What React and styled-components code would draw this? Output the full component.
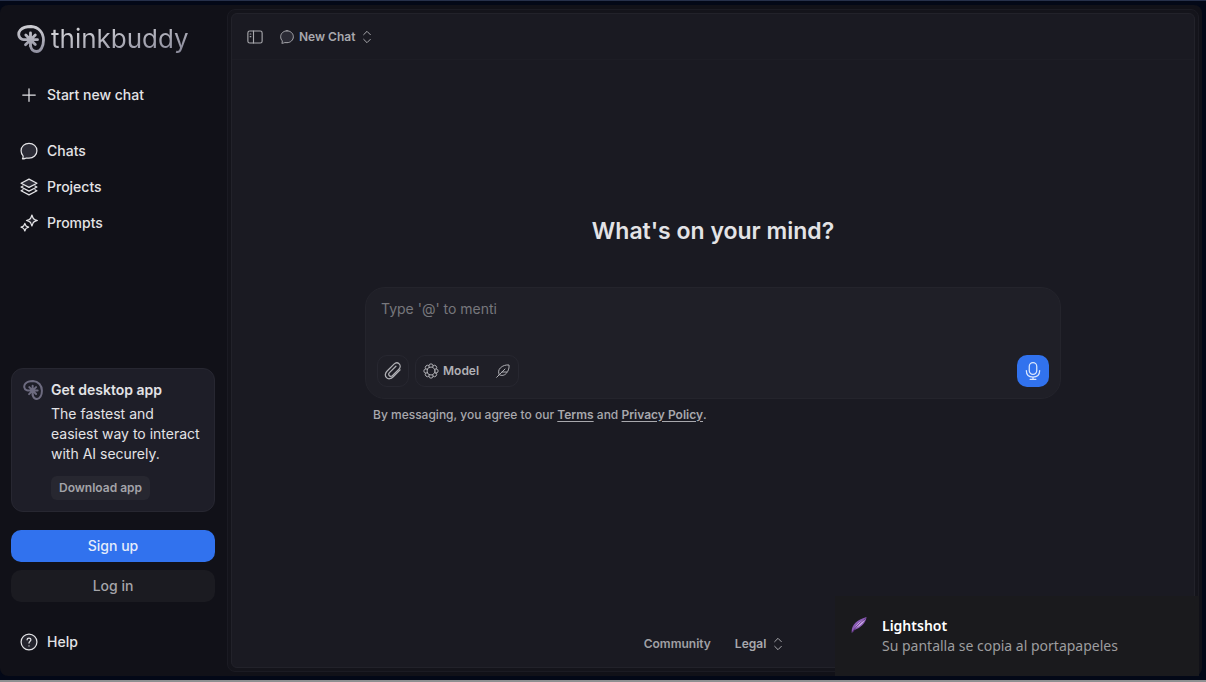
import styled, { createGlobalStyle } from "styled-components";

const GlobalStyle = createGlobalStyle`
  * {
    box-sizing: border-box;
  }
  body {
    margin: 0;
    background: #030817;
    font-family: Inter, "Liberation Sans", sans-serif;
    font-size: 14px;
    line-height: 20px;
    color: #e3e3e6;
  }
  button, textarea {
    font: inherit;
    color: inherit;
    border: 0;
    padding: 0;
    margin: 0;
    background: none;
  }
  button {
    cursor: pointer;
  }
  h1, h2, p {
    margin: 0;
  }
  svg {
    display: block;
    flex: none;
  }
`;

const Desktop = styled.div`
  position: relative;
  display: flex;
  flex-direction: column;
  min-height: 100vh;
  border-top: 1px solid #26304a;
  border-bottom: 2px solid #8f9092;
`;

const Window = styled.div`
  flex: 1;
  display: flex;
  margin: 4px 4px 4px 0;
  padding: 4px 3px 4px 0;
  background: #111118;
  border-radius: 8px;
`;

const Sidebar = styled.aside`
  display: flex;
  flex-direction: column;
  width: 227px;
  flex: none;
  padding: 16px 12px 12px 11px;
`;

const Brand = styled.a`
  display: flex;
  align-items: center;
  gap: 6px;
  height: 28px;
  margin-left: 6px;
  text-decoration: none;
`;

const BrandName = styled.span`
  font-size: 26px;
  line-height: 32px;
  color: transparent;
  background: linear-gradient(170deg, #cfcfd4 20%, #8c8c9c 90%);
  background-clip: text;
`;

const Nav = styled.nav`
  display: flex;
  flex-direction: column;
  margin-top: ${(p) => p.$gap}px;
`;

const NavLink = styled.a`
  display: flex;
  align-items: center;
  gap: 8px;
  height: 36px;
  padding-left: 8px;
  font-weight: 500;
  color: #e3e3e6;
  text-decoration: none;
`;

const Card = styled.section`
  display: flex;
  gap: 8px;
  margin-top: auto;
  padding: 11px 12px 11px 11px;
  background: #1e1e28;
  border: 1px solid #272731;
  border-radius: 12px;
`;

const CardIcon = styled.div`
  color: #6d6b80;
`;

const CardTitle = styled.h2`
  font-size: 14px;
  line-height: 20px;
  font-weight: 600;
`;

const CardText = styled.p`
  margin: 4px 0 12px;
`;

const SmallButton = styled.button`
  height: 24px;
  padding: 0 8px;
  border-radius: 6px;
  background: #272730;
  color: #a3a3a8;
  font-size: 12px;
  font-weight: 600;
`;

const WideButton = styled.button`
  height: 32px;
  margin-top: ${(p) => (p.$primary ? 18 : 8)}px;
  border-radius: 10px;
  font-weight: 500;
  background: ${(p) => (p.$primary ? "#3172ee" : "#1b1b21")};
  color: ${(p) => (p.$primary ? "#e4ecfb" : "#a5a5aa")};
`;

const Frame = styled.div`
  flex: 1;
  display: flex;
  padding: 3px;
  border: 1px solid #1b1b23;
  border-radius: 8px;
  background: #14141b;
`;

const Main = styled.main`
  flex: 1;
  display: flex;
  flex-direction: column;
  border: 1px solid #22222a;
  border-radius: 6px;
  background: #1a1a22;
`;

const Header = styled.header`
  display: flex;
  align-items: center;
  gap: 15px;
  height: 46px;
  padding-left: 14px;
  border-bottom: 1px solid #1d1d25;
  color: #a8a8ad;
`;

const TextButton = styled.button`
  display: flex;
  align-items: center;
  gap: 4px;
  font-size: 12px;
  font-weight: 600;
  color: #a8a8ad;
`;

const Center = styled.div`
  flex: 1;
  display: flex;
  flex-direction: column;
  align-items: center;
  justify-content: center;
  padding: 0 24px 42px;
`;

const Title = styled.h1`
  font-size: 23px;
  line-height: 32px;
  font-weight: 600;
`;

const Composer = styled.form`
  width: 100%;
  max-width: 696px;
  margin-top: 40px;
  padding: 11px;
  border: 1px solid #24242c;
  border-radius: 20px;
  background: #1f1f27;
`;

const Prompt = styled.textarea`
  display: block;
  width: 100%;
  height: 56px;
  padding: 0 4px;
  resize: none;
  outline: none;
  line-height: 20px;
  &::placeholder {
    color: #77777c;
    opacity: 1;
  }
`;

const Tools = styled.div`
  display: flex;
  gap: 6px;
  color: #b0b0b5;
`;

const ToolGroup = styled.div`
  display: flex;
  align-items: center;
  gap: 2px;
  height: 32px;
  border: 1px solid #272730;
  border-radius: 10px;
`;

const Tool = styled.button`
  display: flex;
  align-items: center;
  justify-content: center;
  gap: 4px;
  min-width: 30px;
  height: 30px;
  padding: 0 ${(p) => (p.$iconOnly ? 0 : 7)}px;
  font-size: 12px;
  font-weight: 600;
`;

const MicButton = styled.button`
  display: flex;
  align-items: center;
  justify-content: center;
  width: 32px;
  height: 32px;
  margin-left: auto;
  border-radius: 10px;
  background: #3172ee;
  color: #dbe7fd;
`;

const Notice = styled.p`
  width: 100%;
  max-width: 696px;
  margin-top: 6px;
  padding: 0 8px;
  font-size: 12px;
  font-weight: 500;
  color: #a8a8ad;
  a {
    color: inherit;
    font-weight: 600;
    text-underline-offset: 2px;
  }
`;

const Footer = styled.footer`
  display: flex;
  align-items: center;
  justify-content: center;
  gap: 24px;
  height: 46px;
  padding-left: 4px;
  color: #9c9ca1;
`;

const FooterLink = styled.a`
  font-size: 12px;
  font-weight: 600;
  color: #a0a0a5;
  text-decoration: none;
`;

const Toast = styled.div`
  position: absolute;
  right: 7px;
  bottom: 4px;
  display: flex;
  gap: 14px;
  width: 364px;
  height: 80px;
  padding: 20px 16px;
  background: #1a1a1d;
  font-family: "Noto Sans", "Open Sans", sans-serif;
  font-size: 14px;
  line-height: 20px;
  color: #9d9d9f;
`;

const ToastTitle = styled.p`
  font-weight: 600;
  color: #fff;
`;

const Icon = ({ size = 20, width = 1.5, children }) => (
  <svg
    width={size}
    height={size}
    viewBox="0 0 24 24"
    fill="none"
    stroke="currentColor"
    strokeWidth={width}
    strokeLinecap="round"
    strokeLinejoin="round"
    aria-hidden="true"
  >
    {children}
  </svg>
);

const BrandMark = ({ size, color = "currentColor" }) => (
  <svg width={size} height={size} viewBox="0 0 28 28" fill="none" stroke={color} strokeLinecap="round" aria-hidden="true">
    <defs>
      <linearGradient id="mark" x1="0" y1="0" x2="0" y2="28" gradientUnits="userSpaceOnUse">
        <stop stopColor="#cfcfd4" />
        <stop offset="1" stopColor="#8f8f9f" />
      </linearGradient>
    </defs>
    <path
      strokeWidth="2.800"
      d="M5 14.200C1.400 12.600.7 8.200 3.300 5.200C6 2.200 10.500 1.500 14 1.500C21.500 1.800 26.500 7.600 26.500 15C26.500 21.600 23.600 26.500 19.600 26.500C16.400 26.500 14.200 24.300 13.600 21"
    />
    <path strokeWidth="2.800" d="M13.500 8V21M6.500 14.700H20.500M8.800 10L18.300 19.500M18.300 10L8.500 19.800" />
  </svg>
);

const ChatIcon = ({ size, width }) => (
  <Icon size={size} width={width}>
    <path
      fill="#2b2b35"
      d="M12 2.700C17.300 2.700 21.500 6.600 21.500 11.600S17.300 20.500 12 20.500C10.800 20.500 9.700 20.500 8.700 20.400C7.300 20.800 6.300 21.500 4.200 21.400C4.700 20.300 5.200 19.200 4.900 17.800C3.300 16.100 2.500 14 2.500 11.600C2.500 6.600 6.700 2.700 12 2.700Z"
    />
  </Icon>
);

const ChevronsIcon = () => (
  <Icon size={16}>
    <path d="M7 8.500L12 3.500L17 8.500M7 15.500L12 20.500L17 15.500" />
  </Icon>
);

const HelpIcon = () => (
  <Icon>
    <circle cx="12" cy="12" r="9.500" fill="#24242d" />
    <path d="M9.700 9.300C9.700 8 10.700 7.200 12 7.200S14.300 8 14.300 9.300C14.300 11 12 11.200 12 13.300M12 16.600V16.700" />
  </Icon>
);

// eight small lobes around an open ring
const ModelIcon = () => {
  const points = Array.from({ length: 8 }, (_, i) => {
    const a = ((i + 0.5) * Math.PI) / 4;
    return [12 + 8.2 * Math.cos(a), 12 + 8.2 * Math.sin(a)].map((n) => n.toFixed(2)).join(" ");
  });
  const d = points.map((p, i) => (i ? `A2.700 2.700 0 0 1 ${p}` : `M${p}`)).join("") + `A2.700 2.700 0 0 1 ${points[0]}Z`;
  const spokes = Array.from({ length: 8 }, (_, i) => {
    const a = ((i + 0.5) * Math.PI) / 4;
    const at = (r) => `${(12 + r * Math.cos(a)).toFixed(2)} ${(12 + r * Math.sin(a)).toFixed(2)}`;
    return `M${at(6)}L${at(8.2)}`;
  }).join("");
  return (
    <Icon size={16}>
      <path d={d} />
      <path d={spokes} />
      <circle cx="12" cy="12" r="6" />
    </Icon>
  );
};

const links = [
  {
    label: "Chats",
    icon: <ChatIcon />,
  },
  {
    label: "Projects",
    icon: (
      <Icon>
        <path fill="#2b2b35" d="M12 2.500L21.500 7.500L12 12.500L2.500 7.500Z" />
        <path d="M4.800 10.800L2.500 12L12 17L21.500 12L19.200 10.800M4.800 15.300L2.500 16.500L12 21.500L21.500 16.500L19.200 15.300" />
      </Icon>
    ),
  },
  {
    label: "Prompts",
    icon: (
      <Icon>
        <path
          fill="#24242d"
          d="M15.500 2.500L16.600 5.400C17.100 6.900 17.600 7.300 19 7.900L22 9L19 10.100C17.600 10.700 17.100 11.100 16.600 12.600L15.500 15.500L14.400 12.600C13.900 11.100 13.400 10.700 12 10.100L9 9L12 7.900C13.400 7.300 13.900 6.900 14.400 5.400Z"
        />
        <path d="M7 12.500L8 14.700C8.300 15.500 8.500 15.700 9.300 16L11.500 17L9.300 18C8.500 18.300 8.300 18.500 8 19.300L7 21.500L6 19.300C5.700 18.500 5.500 18.300 4.700 18L2.500 17L4.700 16C5.500 15.700 5.700 15.500 6 14.700Z" />
      </Icon>
    ),
  },
];

export default function App() {
  return (
    <Desktop>
      <GlobalStyle />
      <Window>
        <Sidebar>
          <Brand href="#home">
            <BrandMark size={28} color="url(#mark)" />
            <BrandName>thinkbuddy</BrandName>
          </Brand>
          <Nav $gap={24} aria-label="New">
            <NavLink href="#new">
              <Icon>
                <path d="M12 4.500V19.500M4.500 12H19.500" />
              </Icon>
              Start new chat
            </NavLink>
          </Nav>
          <Nav $gap={20} aria-label="Library">
            {links.map((link) => (
              <NavLink key={link.label} href={"#" + link.label.toLowerCase()}>
                {link.icon}
                {link.label}
              </NavLink>
            ))}
          </Nav>

          <Card>
            <CardIcon>
              <BrandMark size={20} />
            </CardIcon>
            <div>
              <CardTitle>Get desktop app</CardTitle>
              <CardText>The fastest and easiest way to interact with AI securely.</CardText>
              <SmallButton type="button">Download app</SmallButton>
            </div>
          </Card>
          <WideButton type="button" $primary>
            Sign up
          </WideButton>
          <WideButton type="button">Log in</WideButton>
          <Nav $gap={22} aria-label="Support">
            <NavLink href="#help">
              <HelpIcon />
              Help
            </NavLink>
          </Nav>
        </Sidebar>

        <Frame>
          <Main>
            <Header>
              <button type="button" aria-label="Toggle sidebar">
                <Icon size={18}>
                  <rect x="2.500" y="4" width="19" height="16" rx="2.500" />
                  <path d="M10 4V20M5.500 8H6.500M5.500 11.500H6.500" />
                </Icon>
              </button>
              <TextButton type="button">
                <ChatIcon size={16} />
                New Chat
                <ChevronsIcon />
              </TextButton>
            </Header>

            <Center>
              <Title>What's on your mind?</Title>
              <Composer>
                <Prompt aria-label="Message" placeholder="Type '@' to menti" />
                <Tools>
                  <ToolGroup>
                    <Tool type="button" $iconOnly aria-label="Attach file">
                      <Icon size={20}>
                        <path d="M20.500 10.700L12.300 18.900C9.600 21.600 6.400 22.200 4.200 19.900C2 17.700 2.500 14.500 5 12L13.200 3.800C15.200 1.800 17.800 1.900 19.400 3.500C21 5.100 21.100 7.700 19.100 9.700L11.300 17.500C10.200 18.600 8.700 18.700 7.700 17.700C6.600 16.600 6.700 15.100 7.800 14L15.500 6.300" />
                      </Icon>
                    </Tool>
                  </ToolGroup>
                  <ToolGroup>
                    <Tool type="button">
                      <ModelIcon />
                      Model
                    </Tool>
                    <Tool type="button" $iconOnly aria-label="Writing style">
                      <Icon size={16}>
                        <path d="M2.500 21.500L15 9M6.500 17.500C4.500 14 5.200 10.200 8 7.400C11.500 3.900 16.500 2.500 21 3C21.500 7 20.500 11.500 17 15.500C14 18.800 9.800 19.700 6.500 17.500ZM10.500 13.500H17.500" />
                      </Icon>
                    </Tool>
                  </ToolGroup>
                  <MicButton type="button" aria-label="Record voice">
                    <Icon>
                      <rect x="7.500" y="2" width="9" height="14" rx="4.500" />
                      <path d="M4 11.500C4 16.500 7.400 19.300 12 19.300S20 16.500 20 11.500M12 19.300V22M8.500 22H15.500" />
                    </Icon>
                  </MicButton>
                </Tools>
              </Composer>
              <Notice>
                By messaging, you agree to our <a href="#terms">Terms</a> and <a href="#privacy">Privacy Policy</a>.
              </Notice>
            </Center>

            <Footer>
              <FooterLink href="#community">Community</FooterLink>
              <TextButton type="button">
                Legal
                <ChevronsIcon />
              </TextButton>
            </Footer>
          </Main>
        </Frame>
      </Window>

      <Toast role="status">
        <svg width="17" height="18" viewBox="0 0 17 18" aria-hidden="true">
          <path fill="#8a5cb4" d="M.8 17C-.2 10 5 4 15.500 1C15 7 9.500 12 3.500 14Z" />
          <path fill="#d3b4ee" d="M3.500 12.500C5.500 8 9.500 5 14 3C12.500 7 8.500 10.500 3.500 12.500Z" />
          <path stroke="#5b2b7d" fill="none" d="M1.500 16C4.500 11 9 7 14.500 2.500" />
        </svg>
        <div>
          <ToastTitle>Lightshot</ToastTitle>
          <p>Su pantalla se copia al portapapeles</p>
        </div>
      </Toast>
    </Desktop>
  );
}
